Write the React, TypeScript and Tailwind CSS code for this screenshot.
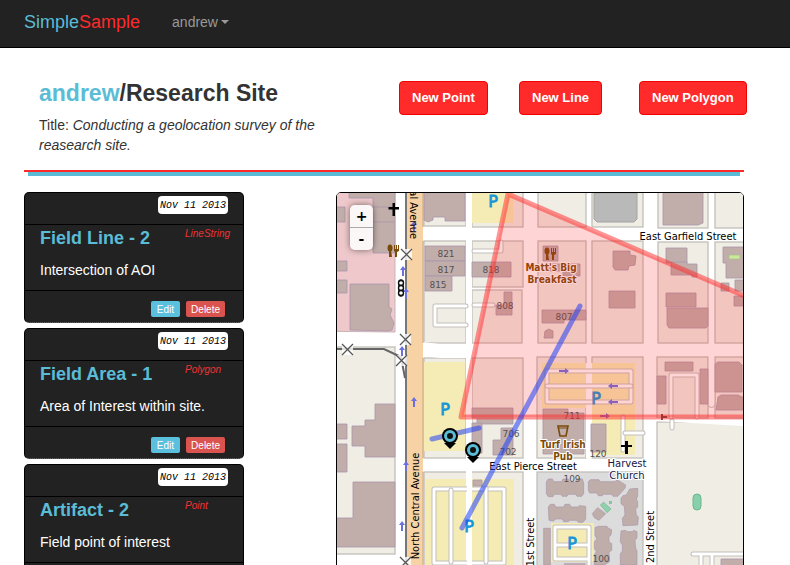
import React from "react";

type Feature = { name: string; kind: string; text: string; date: string };

const features: Feature[] = [
  { name: "Field Line - 2", kind: "LineString", text: "Intersection of AOI", date: "Nov 11 2013" },
  { name: "Field Area - 1", kind: "Polygon", text: "Area of Interest within site.", date: "Nov 11 2013" },
  { name: "Artifact - 2", kind: "Point", text: "Field point of interest", date: "Nov 11 2013" },
];

// City blocks between the white streets: x, y, width, height
const blocks: number[][] = [
  [330, 347, 65, 207],
  [424, 180, 42, 46], [472, 180, 51, 47], [538, 180, 48, 47], [592, 180, 51, 47], [658, 180, 50, 48], [715, 180, 40, 48],
  [424, 241, 42, 102], [472, 241, 51, 46], [472, 290, 50, 53], [538, 241, 48, 102], [592, 241, 51, 102], [658, 242, 50, 101], [715, 242, 40, 101],
  [424, 358, 42, 100], [472, 358, 51, 100], [537, 357, 49, 101], [592, 357, 51, 101], [657, 357, 51, 61], [715, 357, 40, 61],
  [424, 472, 99, 160], [657, 422, 100, 200],
];

const parking: number[][] = [
  [472, 180, 41, 43], [424, 362, 41, 89], [542, 363, 44, 45], [592, 363, 43, 92], [425, 479, 89, 140],
];

// Building footprints as polygon points
const buildings: string[] = [
  "349,180 349,198 373,198 373,253 395,253 395,180",
  "330,207 345,207 345,222 330,222",
  "330,261 347,261 347,271 330,271",
  "330,280 347,280 347,293 330,293",
  "350,284 389,284 389,307 392,309 390,315 394,323 392,330 388,331 350,330",
  "330,424 347,424 347,439 330,439",
  "330,444 347,444 347,472 330,472",
  "352,426 365,426 365,420 375,420 375,404 395,404 395,457 365,457 365,446 352,446",
  "353,482 395,482 395,547 330,547 330,518 353,518",
  "424,180 465,180 465,221 445,221 445,217 433,217 433,220 428,222 424,220",
  "425,246 465,246 465,261 425,261",
  "425,261 465,261 465,276 425,276",
  "425,276 452,276 452,291 425,291",
  "472,262 511,262 511,277 472,277",
  "504,292 512,292 512,315 496,315 496,305 504,305",
  "472,408 513,408 513,424 477,424 477,418 472,418",
  "472,423 482,423 482,453 472,453",
  "501,428 513,428 513,455 493,455 493,440 501,440",
  "543,246 558,246 558,261 543,261",
  "547,264 580,264 580,276 563,276 563,271 547,271",
  "542,310 586,310 586,320 564,320 564,323 542,323",
  "545,331 549,329 553,331 553,338 544,338",
  "543,409 568,409 568,413 584,413 584,454 543,454",
  "591,424 606,424 606,452 591,452",
  "663,180 703,180 703,223 698,225 663,225",
  "613,251 630,251 630,255 636,256 635,265 629,266 628,270 615,270 613,267",
  "609,291 635,291 635,308 609,308",
  "666,248 687,248 687,263 666,263",
  "671,262 687,262 687,264 697,264 697,277 692,277 692,275 671,275",
  "666,293 696,293 696,307 666,307",
  "667,308 708,308 708,326 706,328 669,328 667,325",
  "723,247 755,247 755,278 726,278 726,263 723,263",
  "735,280 755,280 755,291 735,291",
  "721,283 729,283 729,291 721,291",
  "734,296 755,296 755,306 734,306",
  "665,362 693,362 693,371 665,371",
  "657,376 666,376 666,404 657,404",
  "700,369 708,369 708,404 700,404",
  "715,364 718,362 739,362 742,365 742,392 715,392",
  "718,397 721,395 738,395 742,397 755,397 755,410 716,410",
  "473,480 482,480 482,486 473,486",
  "721,559 755,559 755,620 721,620",
];

// Apartment footprints, drawn three times up and scaled into the grey block
const apartments: string[] = [
  "34,140 40,132 52,132 56,140 80,140 84,132 100,132 104,142 120,142 126,132 142,132 146,144 146,176 140,184 126,184 122,178 100,178 96,184 82,184 78,178 58,178 54,185 40,185 34,176",
  "160,140 166,134 192,134 196,140 240,140 246,134 272,150 270,160 248,184 234,184 230,178 206,178 202,182 190,182 186,174 164,174 160,166",
  "258,190 264,182 274,180 284,162 308,160 308,184 304,192 308,200 308,216 302,222 304,240 310,246 308,270 264,272 262,250 270,240 268,214 258,206",
  "40,216 46,208 58,208 62,216 86,216 90,208 104,208 108,216 128,216 134,212 152,214 152,252 144,262 130,262 126,256 104,256 100,260 86,260 82,252 60,252 56,258 42,256",
  "258,288 272,286 276,290 292,290 296,286 306,290 306,308 300,316 302,340 306,348 306,390 256,390 256,356 262,348 262,330 256,320",
  "180,278 190,274 216,274 220,280 230,284 228,300 222,306 222,320 230,326 230,346 222,352 224,380 208,390 178,390 178,360 184,350 178,340 178,320 186,312 180,300",
  "26,280 46,280 46,390 26,390",
  "172,236 188,218 212,236 192,256 178,248",
  "88,386 150,386 150,396 88,396",
];

const houseNumbers: [string, number, number][] = [
  ["821", 446, 257], ["817", 446, 273], ["815", 438, 288], ["818", 491, 273], ["808", 505, 309], ["807", 564, 320],
  ["711", 572, 419], ["706", 511, 437], ["702", 508, 455], ["120", 598, 457], ["109", 572, 482], ["100", 601, 562],
];

const crossings: number[][] = [[406, 254], [405, 339], [401, 360], [347, 349], [405, 562]];
const upArrows: number[][] = [[414, 226], [403, 271], [406, 293], [402, 351], [414, 402], [406, 466], [402, 526]];
const sideArrows: [number, number, number][] = [[564, 371, 1], [613, 386, -1], [613, 402, -1], [605, 416, 1]];
const parkingSigns: number[][] = [[493, 207], [445, 415], [596, 404], [469, 532], [572, 549]];
const pins: number[][] = [[450, 436], [473, 450]];

function Alley({ d }: { d: string }) {
  return (
    <g fill="none" strokeLinecap="round" strokeLinejoin="round">
      <path d={d} stroke="#c3bfba" strokeWidth="5" />
      <path d={d} stroke="#ffffff" strokeWidth="3" />
    </g>
  );
}

function SiteMap() {
  return (
    <svg
      role="img"
      aria-label="Site map"
      viewBox="337 193 406 400"
      preserveAspectRatio="xMinYMin slice"
      className="block h-[400px] w-full font-['DejaVu_Sans',sans-serif]"
    >
      <rect x="300" y="150" width="500" height="500" fill="#ffffff" />
      <path d="M300 150H395V332L300 331Z" fill="#eec8ca" stroke="#c9b4b8" />
      <g fill="#f0ede5" stroke="#c2bfba" strokeWidth="1.3">
        {blocks.map(([x, y, w, h]) => (
          <rect key={`${x}-${y}`} x={x} y={y} width={w} height={h} />
        ))}
        <rect x="537" y="472" width="106" height="160" fill="#dcdcdc" />
      </g>
      <path d="M422 342L440 344H472V358H440L422 356Z" fill="#ffffff" />
      <g fill="#f5ecb5">
        {parking.map(([x, y, w, h]) => (
          <rect key={`${x}-${y}`} x={x} y={y} width={w} height={h} />
        ))}
        <rect x="551" y="523" width="43" height="39" />
      </g>
      <path d="M586 363V458H592V363Z" fill="#ffffff" />
      <path d="M466 180V640H472V180Z" fill="#ffffff" />
      <path d="M594 193H637V219L634 222H597L594 219Z" fill="#b9b9b9" stroke="#a3a3a3" />

      <path d="M643 418L657 418L760 421V427L657 421Z" fill="#ffffff" />
      <path d="M708 357V404A3.500 3.500 0 0 0 715 404V357" fill="#ffffff" stroke="#c2bfba" />
      <Alley d="M466 306H435V325H466" />
      <Alley d="M474 251H501V242" />
      <Alley d="M474 305H493" />
      <Alley d="M547 371H631V402H547Z" />
      <Alley d="M547 386H631" />
      <Alley d="M671 417V375H697V417" />
      <Alley d="M672 421V428" />
      <Alley d="M623 417V450" />
      <Alley d="M625 433H643" />
      <Alley d="M434 489H504V563H434Z" />
      <Alley d="M451 490V562M486 488V562" />
      <Alley d="M555 527H589V559H555ZM555 545H589M589 559V600" />
      <Alley d="M693 554H750M701 554V600M712 554V600" />
      <rect x="467" y="470" width="5" height="120" fill="#ffffff" />

      <g fill="#c1aeab" stroke="#a996ab" strokeWidth="0.8">
        {buildings.map((points) => (
          <polygon key={points} points={points} />
        ))}
        <path d="M373 207H395M373 222H395" />
      </g>
      <g transform="translate(535 435) scale(0.3333)" stroke="#a996ab" strokeWidth="2" fill="#bfadaa">
        {apartments.map((points) => (
          <polygon key={points} points={points} />
        ))}
        <path d="M196 210L206 202L228 222L216 233Z" fill="#8fd1ad" stroke="#75b394" />
        <rect x="223" y="199" width="7" height="7" fill="#8fd1ad" stroke="#75b394" />
      </g>
      <rect x="729" y="255" width="11" height="4" fill="#cbe99b" stroke="#a4bd84" strokeWidth="0.6" />
      <rect x="693" y="494" width="8" height="16" rx="4" fill="#87d0ab" stroke="#6db692" />

      <rect x="407" y="180" width="16" height="460" fill="#f6d2a4" />
      <path d="M423 180V227M423 241V343M423 358V458M423 472V640" stroke="#c8aa87" />
      <path d="M406 180V640" stroke="#777777" strokeWidth="2" />
      <path d="M330 349H384L401 357L405 378" fill="none" stroke="#666666" strokeWidth="2" />

      {crossings.map(([x, y]) => (
        <g key={`${x}-${y}`}>
          <rect x={x - 5} y={y - 5} width="11" height="11" fill="#ffffff" opacity="0.8" />
          <path d={`M${x - 5} ${y - 5}l11 11m0-11l-11 11`} stroke="#555555" strokeWidth="1.3" />
        </g>
      ))}
      <g fill="#6c70df">
        {upArrows.map(([x, y]) => (
          <path key={`${x}-${y}`} d={`M${x} ${y - 5}l3 4h-2v6h-2v-6h-2Z`} />
        ))}
        {sideArrows.map(([x, y, s]) => (
          <path key={`${x}-${y}`} d={`M${x + 5 * s} ${y}l${-4 * s} 3v-2h${-6 * s}v-2h${6 * s}v-2Z`} />
        ))}
      </g>
      <path d="M392.500 203h2.500v4h4v2.500h-4v6.500h-2.500v-6.500h-4v-2.500h4Z" fill="#000000" />
      <path d="M625 441h3v4h4v2h-4v7h-3v-7h-4v-2h4Z" fill="#000000" />
      <g fill="#ffffff" stroke="#111111" strokeWidth="1.4">
        <rect x="399" y="280" width="4" height="16" rx="2" />
        <circle cx="401" cy="283" r="2.500" />
        <circle cx="401" cy="288" r="2.500" />
        <circle cx="401" cy="293" r="2.500" />
      </g>
      {[[389, 245], [546, 248]].map(([x, y]) => (
        <g key={x} fill="#7a4a08">
          <ellipse cx={x + 1} cy={y + 3} rx="2.500" ry="3.500" />
          <path d={`M${x} ${y + 5}h2l1 7h-3ZM${x + 5} ${y}h1v4h1v-4h1v4h1v-4h1v6l-2 1v5h-2v-5l-1-1Z`} />
        </g>
      ))}
      <path d="M558 426H568L566 436H560Z" fill="none" stroke="#7a4a08" strokeWidth="1.6" />
      <path d="M559 428H567" stroke="#7a4a08" />

      <g textAnchor="middle" className="text-[9px]" fill="#555152">
        {houseNumbers.map(([label, x, y]) => (
          <text key={label} x={x} y={y}>{label}</text>
        ))}
      </g>
      <g textAnchor="middle" className="text-[16px]" fill="#1496d8" stroke="#1496d8" strokeWidth="0.8">
        {parkingSigns.map(([x, y]) => (
          <text key={`${x}-${y}`} x={x} y={y}>P</text>
        ))}
      </g>
      <g
        textAnchor="middle"
        className="font-['DejaVu_Sans_Condensed','DejaVu_Sans',sans-serif] text-[10px] font-bold [font-stretch:condensed]"
        fill="#7a4a08"
        stroke="#ffffff"
        strokeWidth="2"
        strokeLinejoin="round"
        paintOrder="stroke"
      >
        <text x="551" y="271">Matt's Big</text>
        <text x="552" y="283">Breakfast</text>
        <text x="563" y="448">Turf Irish</text>
        <text x="563" y="460">Pub</text>
      </g>
      <g textAnchor="middle" className="text-[10px]" fill="#16164a" stroke="#ffffff" strokeWidth="2" paintOrder="stroke">
        <text x="627" y="467">Harvest</text>
        <text x="627" y="479">Church</text>
      </g>
      <g
        className="font-['DejaVu_Sans_Condensed','DejaVu_Sans',sans-serif] text-[11px] [font-stretch:condensed]"
        fill="#000000"
        textAnchor="middle"
      >
        <text x="688" y="240">East Garfield Street</text>
        <text x="533" y="470">East Pierce Street</text>
        <text transform="translate(419 506) rotate(-90)">North Central Avenue</text>
        <text transform="translate(410 239) rotate(90)" textAnchor="end">North Central Avenue</text>
        <text transform="translate(534 542) rotate(-90)">1st Street</text>
        <text transform="translate(654 537) rotate(-90)">2nd Street</text>
      </g>

      <path
        d="M508 194L461 417H900V363Z"
        fill="#ff2a2a"
        fillOpacity="0.2"
        stroke="#ff2a2a"
        strokeOpacity="0.5"
        strokeWidth="5"
        strokeLinejoin="round"
      />
      <path d="M662 414V420M663 417H667" stroke="#8d2020" strokeWidth="1.6" />
      <g stroke="#1f3ff5" strokeOpacity="0.55" strokeWidth="5" strokeLinecap="round">
        <path d="M580 306L462 528" />
        <path d="M432 439L479 428" />
      </g>
      {pins.map(([x, y]) => (
        <g key={x}>
          <path d={`M${x - 6} ${y + 7}H${x + 6}L${x} ${y + 13}Z`} fill="#000000" />
          <circle cx={x} cy={y} r="8" fill="#000000" />
          <circle cx={x} cy={y} r="4.500" fill="#111111" stroke="#5bbcd6" strokeWidth="3" />
        </g>
      ))}
    </svg>
  );
}

function FeatureCard({ name, kind, text, date }: Feature) {
  return (
    <article className="rounded-[5px] border border-black border-b-[#777777] bg-[#222222] [border-bottom-style:dotted]">
      <header className="flex h-8 items-start justify-end border-b border-black pt-[3px] pr-[15px]">
        <time className="h-[18px] rounded bg-white px-[2px] font-['Liberation_Mono',monospace] text-[10px] leading-[20px] text-black italic">
          {date}
        </time>
      </header>
      <div className="h-[66px] border-b border-black px-[15px]">
        <div className="grid grid-cols-[145px_1fr]">
          <h2 className="text-[18px] leading-[26px] font-bold text-[#5bbcd6]">{name}</h2>
          <em className="text-[10px] leading-[17px] text-[#ee3333]">{kind}</em>
        </div>
        <p className="mt-[9px] text-[14px] leading-[20px] text-white">{text}</p>
      </div>
      <footer className="flex h-[31px] items-start justify-end gap-[6px] pt-[10px] pr-[18px]">
        <button className="h-4 rounded-xs bg-[#5bc0de] px-[6px] text-[10px] leading-[17px] text-white">Edit</button>
        <button className="h-4 rounded-xs bg-[#d9534f] px-[5px] text-[10px] leading-[17px] text-white">Delete</button>
      </footer>
    </article>
  );
}

export default function App() {
  return (
    <div className="min-h-screen bg-white font-['Liberation_Sans',Arial,sans-serif] text-[14px] leading-5 text-[#333333]">
      <nav className="flex h-12 items-center gap-8 border-b border-black bg-[#222222] px-6 pb-[3px]">
        <a href="#home" className="text-[18px] text-[#5bbcd6]">
          Simple<span className="text-[#ff2a2a]">Sample</span>
        </a>
        <button className="flex items-center gap-[3px] text-[14px] text-[#999999]">
          andrew
          <svg viewBox="0 0 8 4" className="h-1 w-2" aria-hidden="true">
            <path d="M0 0H8L4 4Z" fill="#999999" />
          </svg>
        </button>
      </nav>

      <main className="pr-[46px] pl-6">
        <div className="grid grid-cols-12 pt-[30px] pb-[15px]">
          <div className="col-span-6 px-[15px]">
            <h1 className="text-[23px] leading-[30px] font-bold">
              <a href="#andrew" className="text-[#5bbcd6]">andrew</a>/Research Site
            </h1>
            <p className="mt-[7px]">
              Title: <em>Conducting a geolocation survey of the reasearch site.</em>
            </p>
          </div>
          {["New Point", "New Line", "New Polygon"].map((label) => (
            <div key={label} className="col-span-2 pt-[3px] pl-[15px]">
              <button className="h-[34px] rounded border border-[#f00000] bg-[#ff2a2a] px-3 text-[13px] font-bold whitespace-nowrap text-white">
                {label}
              </button>
            </div>
          ))}
        </div>
        <div className="h-[2px] bg-[#ff2a2a]" />
        <div className="mx-1 h-1 bg-[#5bbcd6]" />

        <div className="mt-4 flex items-start gap-[92px]">
          <section aria-label="Features" className="flex w-[220px] shrink-0 flex-col gap-[5px]">
            {features.map((feature) => (
              <FeatureCard key={feature.name} {...feature} />
            ))}
          </section>
          <section aria-label="Map" className="relative min-w-0 flex-1 overflow-hidden rounded-[5px] border border-black">
            <SiteMap />
            <div className="absolute top-3 left-[13px] flex w-[23px] flex-col overflow-hidden rounded-[5px] bg-white/85 font-['DejaVu_Sans',sans-serif] text-[14px] leading-[22px] font-bold text-black shadow-[0_0_6px_rgba(0,0,0,0.5)]">
              <button aria-label="Zoom in" className="h-[23px] border-b border-[#aaaaaa]">+</button>
              <button aria-label="Zoom out" className="h-[22px]">-</button>
            </div>
          </section>
        </div>
      </main>
    </div>
  );
}
